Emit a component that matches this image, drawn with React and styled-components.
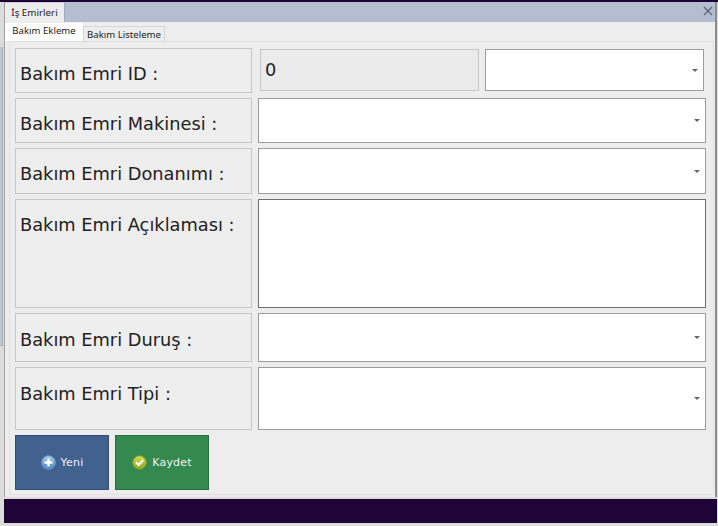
import React from "react"
import styled, { createGlobalStyle } from "styled-components"

const GlobalStyle = createGlobalStyle`
  html, body { margin: 0; padding: 0; }
  body { font-family: "DejaVu Sans", sans-serif; background: #dcdcdc; }
`

function PlusIcon() {
  return (
    <svg width="15" height="15" viewBox="0 0 15 15">
      <defs>
        <linearGradient id="plusFill" x1="0" y1="0" x2="0" y2="1">
          <stop offset="0" stopColor="#a9cdf0" />
          <stop offset="1" stopColor="#4583c4" />
        </linearGradient>
      </defs>
      <circle cx="7.5" cy="7.5" r="6.8" fill="url(#plusFill)" stroke="#6f9ccb" strokeWidth="1" />
      <path d="M7.5 3.5v8M3.5 7.5h8" stroke="#fff" strokeWidth="2.4" />
    </svg>
  )
}

function CheckIcon() {
  return (
    <svg width="15" height="15" viewBox="0 0 15 15">
      <defs>
        <linearGradient id="checkFill" x1="0" y1="0" x2="0" y2="1">
          <stop offset="0" stopColor="#d6dc58" />
          <stop offset="1" stopColor="#8fa822" />
        </linearGradient>
      </defs>
      <circle cx="7.5" cy="7.5" r="6.8" fill="url(#checkFill)" stroke="#7d9a2a" strokeWidth="1" />
      <path d="M4 7.4l2.6 2.6 4.6-5" fill="none" stroke="#fff" strokeWidth="2" />
    </svg>
  )
}

function Select({ height }) {
  return (
    <Combo height={height}>
      <Caret />
    </Combo>
  )
}

export default function App() {
  return (
    <>
      <GlobalStyle />
      <Screen>
        <TopLine />
        <Desk>
          <SideWindow />
          <Stack>
            <Window>
              <DocStrip>
                <DocTab>İş Emirleri</DocTab>
                <CloseButton>
                  <svg width="10" height="10" viewBox="0 0 10 10">
                    <path d="M1 1l8 8M9 1l-8 8" stroke="#5b6470" strokeWidth="1.2" fill="none" />
                  </svg>
                </CloseButton>
              </DocStrip>
              <TabRow>
                <ActiveTab>Bakım Ekleme</ActiveTab>
                <Tab>Bakım Listeleme</Tab>
              </TabRow>
              <Panel>
                <Row>
                  <Label height={45} drop={6}>Bakım Emri ID :</Label>
                  <IdFields>
                    <IdValue>0</IdValue>
                    <Select height={42} />
                  </IdFields>
                </Row>
                <Row>
                  <Label height={45} drop={6}>Bakım Emri Makinesi :</Label>
                  <Select height={45} />
                </Row>
                <Row>
                  <Label height={46} drop={6}>Bakım Emri Donanımı :</Label>
                  <Select height={46} />
                </Row>
                <Row>
                  <Label height={109} top drop={15}>Bakım Emri Açıklaması :</Label>
                  <TextArea />
                </Row>
                <Row>
                  <Label height={49} drop={4}>Bakım Emri Duruş :</Label>
                  <Select height={49} />
                </Row>
                <Row>
                  <Label height={63} top drop={16}>Bakım Emri Tipi :</Label>
                  <Select height={63} />
                </Row>
                <Actions>
                  <ActionButton color="#41618e" edge="#2f4d78">
                    <PlusIcon />
                    Yeni
                  </ActionButton>
                  <ActionButton color="#33894f" edge="#26703e">
                    <CheckIcon />
                    Kaydet
                  </ActionButton>
                </Actions>
              </Panel>
            </Window>
            <Footer />
          </Stack>
        </Desk>
      </Screen>
    </>
  )
}

const Screen = styled.div`
  width: 718px;
  height: 526px;
  overflow: hidden;
  display: flex;
  flex-direction: column;
  background: #dcdcdc;
`
const TopLine = styled.div`
  height: 2px;
  flex: none;
  background: #1f0537;
`
const Desk = styled.div`
  flex: 1;
  display: flex;
`
const SideWindow = styled.div`
  width: 2px;
  height: 298px;
  margin: 45px 1px 0 0;
  flex: none;
  background: #bcc8d8;
  border-right: 1px solid #a8aeb6;
  border-bottom: 1px solid #a8aeb6;
`
const Stack = styled.div`
  width: 713px;
  flex: none;
  display: flex;
  flex-direction: column;
`
const Window = styled.div`
  height: 495px;
  box-sizing: border-box;
  border-left: 1px solid #a0a0a0;
  border-right: 2px solid #8c8c8c;
  display: flex;
  flex-direction: column;
  background: #ededed;
`
const DocStrip = styled.div`
  height: 20px;
  flex: none;
  display: flex;
  justify-content: space-between;
  background: #b3bfd1;
  padding-right: 2px;
`
const DocTab = styled.div`
  width: 60px;
  background: #ededed;
  border-right: 1px solid #a4a9b2;
  border-top: 1px solid #c6ccd6;
  box-sizing: border-box;
  font-family: "Noto Sans", sans-serif;
  font-size: 9.8px;
  line-height: 19px;
  text-align: center;
  color: #222;
`
const CloseButton = styled.div`
  display: flex;
  align-items: center;
  padding-bottom: 2px;
`
const TabRow = styled.div`
  height: 19px;
  flex: none;
  display: flex;
  align-items: flex-end;
`
const Tab = styled.div`
  height: 15px;
  width: 82px;
  box-sizing: border-box;
  background: #ededed;
  border: 1px solid #d6d6d6;
  border-bottom: none;
  font-family: "Noto Sans", sans-serif;
  font-size: 9.6px;
  line-height: 15px;
  text-align: center;
  color: #222;
`
const ActiveTab = styled.div`
  height: 18px;
  width: 78px;
  background: #fff;
  font-family: "Noto Sans", sans-serif;
  font-size: 9.6px;
  line-height: 16px;
  text-align: center;
  color: #222;
`
const Panel = styled.div`
  flex: 1;
  margin: 0 1px 2px 4px;
  border: 1px solid #e2e2e2;
  border-top: 1px solid #dcdcdc;
  padding: 6px 7px 0 5px;
  display: flex;
  flex-direction: column;
  gap: 5px;
`
const Row = styled.div`
  display: flex;
  gap: 6px;
`
const Label = styled.div`
  width: 237px;
  height: ${p => p.height}px;
  box-sizing: border-box;
  flex: none;
  border: 1px solid #c6c6c6;
  background: #eeeeee;
  padding: ${p => p.drop}px 0 0 4px;
  display: flex;
  align-items: ${p => (p.top ? "flex-start" : "center")};
  font-size: 17.8px;
  line-height: 20px;
  color: #222;
`
const IdFields = styled.div`
  flex: 1;
  display: flex;
  gap: 6px;
  padding: 1px 2px 0 2px;
`
const IdValue = styled.div`
  width: 219px;
  height: 42px;
  box-sizing: border-box;
  flex: none;
  border: 1px solid #c6c6c6;
  background: #ebebeb;
  padding-left: 4px;
  font-size: 17.8px;
  line-height: 40px;
  color: #222;
`
const Combo = styled.div`
  flex: 1;
  height: ${p => p.height}px;
  box-sizing: border-box;
  background: #fff;
  border: 1px solid #9c9c9c;
  display: flex;
  align-items: center;
  justify-content: flex-end;
  padding-right: 5px;
`
const Caret = styled.span`
  width: 0;
  height: 0;
  border-left: 3px solid transparent;
  border-right: 3px solid transparent;
  border-top: 3px solid #666;
`
const TextArea = styled.div`
  flex: 1;
  height: 109px;
  box-sizing: border-box;
  background: #fff;
  border: 1px solid #6e6e6e;
`
const Actions = styled.div`
  display: flex;
  gap: 6px;
`
const ActionButton = styled.button`
  width: 94px;
  height: 55px;
  background: ${p => p.color};
  border: 1px solid ${p => p.edge};
  color: #f2f2f2;
  font-family: "DejaVu Sans", sans-serif;
  font-size: 11px;
  letter-spacing: 0.2px;
  display: flex;
  align-items: center;
  justify-content: center;
  gap: 5px;
  padding: 0;
`
const Footer = styled.div`
  height: 24px;
  flex: none;
  margin-top: 2px;
  background: #1f0537;
`
